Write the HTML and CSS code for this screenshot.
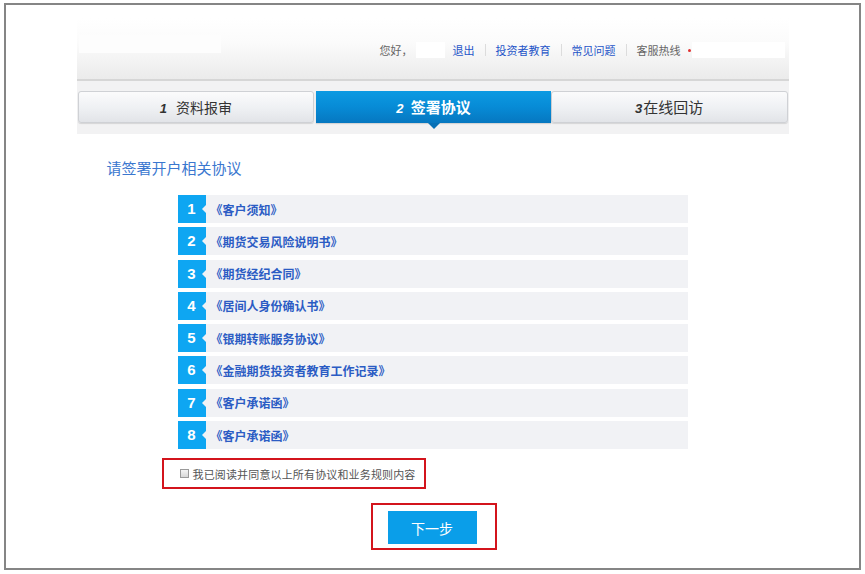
FILE: index.html
```html
<!DOCTYPE html>
<html>
  <head>
    <meta charset="utf-8">
    <meta name="viewport" content="width=device-width">
    <title>签署协议</title>
    <link rel="stylesheet" href="styles.css">
  </head>
  <body>
    <div class="page">
      <div class="wrap">
        <header class="top">
          <div class="logo"></div>
          <div class="links">
            <span class="hello">您好，</span>
            <span class="blank blank-name"></span>
            <a href="#">退出</a>
            <i class="sep"></i>
            <a href="#">投资者教育</a>
            <i class="sep"></i>
            <a href="#">常见问题</a>
            <i class="sep"></i>
            <span class="hotline">客服热线</span>
            <span class="dot"></span>
            <span class="blank blank-phone"></span>
          </div>
        </header>
        <nav class="steps">
          <div class="step step-first"><b>1</b> 资料报审</div>
          <div class="step step-active"><b>2</b> 签署协议</div>
          <div class="step step-last"><b>3</b>在线回访</div>
        </nav>

        <h2 class="title">请签署开户相关协议</h2>

        <ul class="docs">
          <li><span class="num">1</span><a href="#">《客户须知》</a></li>
          <li><span class="num">2</span><a href="#">《期货交易风险说明书》</a></li>
          <li><span class="num">3</span><a href="#">《期货经纪合同》</a></li>
          <li><span class="num">4</span><a href="#">《居间人身份确认书》</a></li>
          <li><span class="num">5</span><a href="#">《银期转账服务协议》</a></li>
          <li><span class="num">6</span><a href="#">《金融期货投资者教育工作记录》</a></li>
          <li><span class="num">7</span><a href="#">《客户承诺函》</a></li>
          <li><span class="num">8</span><a href="#">《客户承诺函》</a></li>
        </ul>

        <label class="agree">
          <span class="check"></span>
          我已阅读并同意以上所有协议和业务规则内容
        </label>

        <div class="next-box">
          <button class="next">下一步</button>
        </div>
      </div>
    </div>
  </body>
</html>
```

FILE: styles.css
```css
* {
  margin: 0;
  padding: 0;
  box-sizing: border-box;
}
body {
  background: #fff;
  font-family: "Noto Sans CJK SC", "Liberation Sans", sans-serif;
  color: #333;
}
a {
  text-decoration: none;
}
.page {
  width: 857px;
  height: 567px;
  margin: 3px 0 0 4px;
  padding-top: 13px;
  border: 2px solid #858585;
}
.wrap {
  width: 712px;
  margin: 0 auto;
}

/* top bar */
.top {
  height: 63px;
  display: flex;
  align-items: flex-start;
  justify-content: space-between;
  background: linear-gradient(#ffffff, #fbfbfb 40%, #ebebeb);
  border-bottom: 2px solid #d6d6d6;
}
.logo {
  width: 142px;
  height: 18px;
  margin: 17px 0 0 2px;
  background: #fdfdfd;
}
.links {
  display: flex;
  align-items: center;
  height: 16px;
  margin: 24px 4px 0 0;
  font-size: 11px;
  line-height: 16px;
}
.links a {
  color: #1f55c8;
}
.hello, .hotline {
  color: #666;
}
.blank {
  display: inline-block;
  height: 16px;
  background: #fff;
}
.blank-name {
  width: 29px;
  margin: 0 8px 0 3px;
}
.blank-phone {
  width: 93px;
  margin-left: 1px;
}
.dot {
  width: 3px;
  height: 3px;
  border-radius: 50%;
  background: #e03030;
  margin-left: 7px;
}
.sep {
  width: 1px;
  height: 12px;
  background: #dcdcdc;
  margin: 0 10px;
}

/* steps */
.steps {
  display: flex;
  padding: 10px 1px 11px 1px;
  background: #f2f2f3;
}
.step {
  flex: 1;
  height: 32px;
  line-height: 30px;
  text-align: center;
  font-size: 15px;
  color: #333;
  background: linear-gradient(#fbfbfc, #eef0f3 55%, #e2e4e8);
  border: 1px solid #cfd1d5;
  border-radius: 3px;
  box-shadow: 0 1px 1px rgba(0, 0, 0, 0.12);
}
.step b {
  font-family: "Liberation Sans", sans-serif;
  font-style: italic;
  font-size: 13px;
  margin-right: 4px;
}
.step-first {
  font-size: 14px;
  margin-right: 2px;
}
.step-first b {
  margin-right: 6px;
}
.step-last b {
  margin-right: 1px;
}
.step-active {
  position: relative;
  color: #fff;
  font-weight: bold;
  border: none;
  border-radius: 0;
  line-height: 32px;
  background: linear-gradient(#0c9ae2, #078bd6 50%, #0677c0);
}
.step-active::after {
  content: "";
  position: absolute;
  left: 50%;
  bottom: -6px;
  margin-left: -6px;
  border-left: 6px solid transparent;
  border-right: 6px solid transparent;
  border-top: 6px solid #0670b6;
}

/* agreements */
.title {
  margin: 24px 0 0 30px;
  font-size: 15px;
  line-height: 20px;
  font-weight: normal;
  color: #3a77cf;
}
.docs {
  list-style: none;
  width: 510px;
  margin: 17px 0 0 101px;
  display: flex;
  flex-direction: column;
  gap: 4.3px;
}
.docs li {
  display: flex;
  align-items: center;
  height: 28px;
  background: #f1f2f5;
}
.num {
  position: relative;
  width: 28px;
  height: 28px;
  line-height: 28px;
  text-align: center;
  font-family: "Liberation Sans", sans-serif;
  font-weight: bold;
  font-size: 15px;
  color: #fff;
  background: #0ea6f2;
}
.num::after {
  content: "";
  position: absolute;
  right: 0;
  top: 10px;
  border-top: 4px solid transparent;
  border-bottom: 4px solid transparent;
  border-right: 4px solid #f1f2f5;
}
.docs a {
  margin-left: 5px;
  font-size: 12px;
  font-weight: bold;
  color: #2b5cc4;
}

.agree {
  display: flex;
  align-items: center;
  width: 264px;
  height: 31px;
  margin: 9px 0 0 85px;
  padding-left: 16px;
  border: 2px solid #d3141c;
  font-size: 11px;
  letter-spacing: 0.15px;
  color: #555;
}
.check {
  width: 9px;
  height: 9px;
  margin-right: 4px;
  border: 1px solid #9a9a9a;
  background: linear-gradient(#f4f4f4, #d8d8d8);
}

.next-box {
  width: 126px;
  height: 47px;
  margin: 14px 0 0 294px;
  padding: 6px 0 0 15px;
  border: 2px solid #d3141c;
}
.next {
  width: 89px;
  height: 33px;
  border: none;
  background: #0a9ee9;
  color: #fff;
  font-family: "Noto Sans CJK SC", sans-serif;
  font-size: 14px;
}
```
